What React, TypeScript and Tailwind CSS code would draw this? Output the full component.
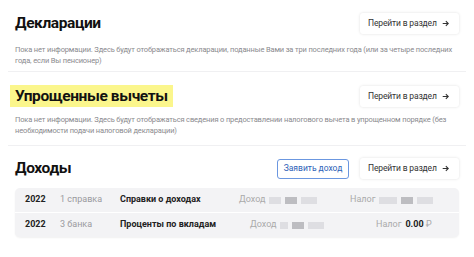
import React from 'react';

const font = { fontFamily: 'Roboto, "Noto Sans", sans-serif' };

function GoButton() {
  return (
    <button className="flex items-center justify-between w-[99px] h-[21px] pl-[8px] pr-[10px] bg-white rounded-[3px] shadow-[0_0_3px_rgba(0,0,0,0.13)] text-[8.5px] tracking-[-0.15px] text-[#333] shrink-0">
      Перейти в раздел
      <svg width="7" height="7" viewBox="0 0 10 10" fill="none" stroke="#333" strokeWidth="1.6">
        <path d="M1 5h8M5.5 1.5L9 5l-3.5 3.5" />
      </svg>
    </button>
  );
}

function Blur({ w, dark }: { w: number; dark?: boolean }) {
  return (
    <span
      className={`inline-block h-[7px] blur-[0.6px] ${dark ? 'bg-[#bdbdc1]' : 'bg-[#dedee2]'}`}
      style={{ width: w }}
    />
  );
}

export default function App() {
  return (
    <div className="w-[474px] h-[257px] bg-white overflow-hidden" style={font}>
      {/* Декларации */}
      <div className="mx-[8px] px-[7px] pt-[13px] pb-[5px] border-b border-[#f0f0f2]">
        <div className="flex items-center justify-between">
          <h2 className="text-[15.5px] leading-[21px] font-bold tracking-[-0.4px] text-[#111]">Декларации</h2>
          <GoButton />
        </div>
        <p className="mt-[10px] text-[7.5px] leading-[11px] tracking-[-0.15px] text-[#8a8a8e]">
          Пока нет информации. Здесь будут отображаться декларации, поданные Вами за три последних года (или за четыре последних года, если Вы пенсионер)
        </p>
      </div>

      {/* Упрощенные вычеты */}
      <div className="mx-[8px] px-[7px] pt-[13px] pb-[9px] border-b border-[#f0f0f2]">
        <div className="flex items-center justify-between">
          <h2 className="-ml-[5px] px-[5px] bg-[#fbf68c] text-[15.5px] leading-[22px] font-bold tracking-[-0.4px] text-[#111]">
            Упрощенные вычеты
          </h2>
          <GoButton />
        </div>
        <p className="mt-[7px] text-[7.5px] leading-[11px] tracking-[-0.15px] text-[#8a8a8e]">
          Пока нет информации. Здесь будут отображаться сведения о предоставлении налогового вычета в упрощенном порядке (без необходимости подачи налоговой декларации)
        </p>
      </div>

      {/* Доходы */}
      <div className="mx-[8px] px-[7px] pt-[12px]">
        <div className="flex items-center justify-between">
          <h2 className="text-[15.5px] leading-[21px] font-bold tracking-[-0.4px] text-[#111]">Доходы</h2>
          <div className="flex items-center gap-[11px]">
            <button className="w-[72px] h-[20px] rounded-[3px] border border-[#6b97e0] bg-white text-[8.5px] text-[#2e5fb8]">
              Заявить доход
            </button>
            <GoButton />
          </div>
        </div>
        <div className="mt-[9px] rounded-[5px] bg-[#f3f3f5] shadow-[0_1px_2px_rgba(0,0,0,0.06)] overflow-hidden">
          {/* row 1 */}
          <div className="flex items-center h-[24px] text-[9px]">
            <span className="w-[35px] ml-[10px] font-bold text-[#222]">2022</span>
            <span className="w-[60px] text-[#9a9a9e]">1 справка</span>
            <span className="w-[119px] font-bold text-[#222]">Справки о доходах</span>
            <span className="flex items-center gap-[4px] w-[111px]">
              <span className="text-[#aaa]">Доход</span>
              <Blur w={12} />
              <Blur w={12} dark />
              <Blur w={16} />
            </span>
            <span className="flex items-center gap-[4px]">
              <span className="text-[#aaa]">Налог</span>
              <Blur w={18} />
              <Blur w={12} dark />
              <Blur w={16} />
            </span>
          </div>
          {/* row 2 */}
          <div className="flex items-center h-[25px] text-[9px] border-t border-white">
            <span className="w-[35px] ml-[10px] font-bold text-[#222]">2022</span>
            <span className="w-[60px] text-[#9a9a9e]">3 банка</span>
            <span className="w-[130px] font-bold text-[#222]">Проценты по вкладам</span>
            <span className="flex items-center gap-[4px] w-[126px]">
              <span className="text-[#aaa]">Доход</span>
              <Blur w={8} />
              <Blur w={12} dark />
              <Blur w={16} />
            </span>
            <span className="flex items-center gap-[4px]">
              <span className="text-[#aaa]">Налог</span>
              <span className="font-bold text-[#222]">
                0.00 <span className="font-normal text-[#aaa]">₽</span>
              </span>
            </span>
          </div>
        </div>
      </div>
    </div>
  );
}
